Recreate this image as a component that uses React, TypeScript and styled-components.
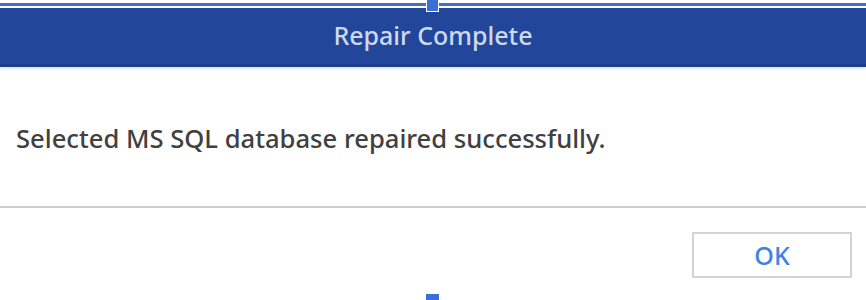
import React from "react";
import styled, { createGlobalStyle } from "styled-components";

const GlobalStyle = createGlobalStyle`
  html, body {
    margin: 0;
    padding: 0;
    background: #ffffff;
  }
  body {
    font-family: "Noto Sans", "Open Sans", sans-serif;
  }
`;

const Stage = styled.div`
  position: relative;
  width: 866px;
  height: 300px;
  overflow: hidden;
  background: #ffffff;
`;

const SelectionTop = styled.div`
  height: 3px;
  margin-top: 3px;
  border-bottom: 2px solid #ffffff;
  background: #3b6fd6;
`;

const Handle = styled.div<{ $bottom?: boolean }>`
  position: absolute;
  left: 426px;
  width: 13px;
  height: ${(p) => (p.$bottom ? "6px" : "12px")};
  ${(p) => (p.$bottom ? "bottom: 0;" : "top: 0;")}
  background: #3b6fd6;
  box-sizing: border-box;
  border: ${(p) => (p.$bottom ? "none" : "1px solid #ffffff")};
  border-top: none;
`;

const Dialog = styled.div`
  display: flex;
  flex-direction: column;
`;

const TitleBar = styled.div`
  box-sizing: border-box;
  height: 59px;
  display: flex;
  align-items: center;
  justify-content: center;
  padding-bottom: 2px;
  background: #22479a;
  border-bottom: 3px solid #1c3d88;
  box-shadow: 0 2px 3px rgba(30, 70, 150, 0.15);
  color: #cdd9ee;
  font-size: 25px;
  font-weight: 500;
`;

const Body = styled.div`
  box-sizing: border-box;
  height: 141px;
  display: flex;
  align-items: center;
  padding: 4px 16px 0;
  color: #404040;
  font-size: 25.6px;
  font-weight: 500;
  border-bottom: 2px solid #cdcdcd;
`;

const Footer = styled.div`
  display: flex;
  justify-content: flex-end;
  padding: 24px 14px 0 0;
`;

const Button = styled.button`
  width: 160px;
  height: 46px;
  padding: 0;
  background: #ffffff;
  border: 2px solid #d4d4d4;
  border-radius: 1px;
  color: #3f82e4;
  font-family: "Noto Sans", "Open Sans", sans-serif;
  font-size: 25px;
  font-weight: 500;
  cursor: pointer;
`;

export default function App() {
  return (
    <>
      <GlobalStyle />
      <Stage>
        <SelectionTop />
        <Handle />
        <Dialog>
          <TitleBar>Repair Complete</TitleBar>
          <Body>Selected MS SQL database repaired successfully.</Body>
          <Footer>
            <Button>OK</Button>
          </Footer>
        </Dialog>
        <Handle $bottom />
      </Stage>
    </>
  );
}
